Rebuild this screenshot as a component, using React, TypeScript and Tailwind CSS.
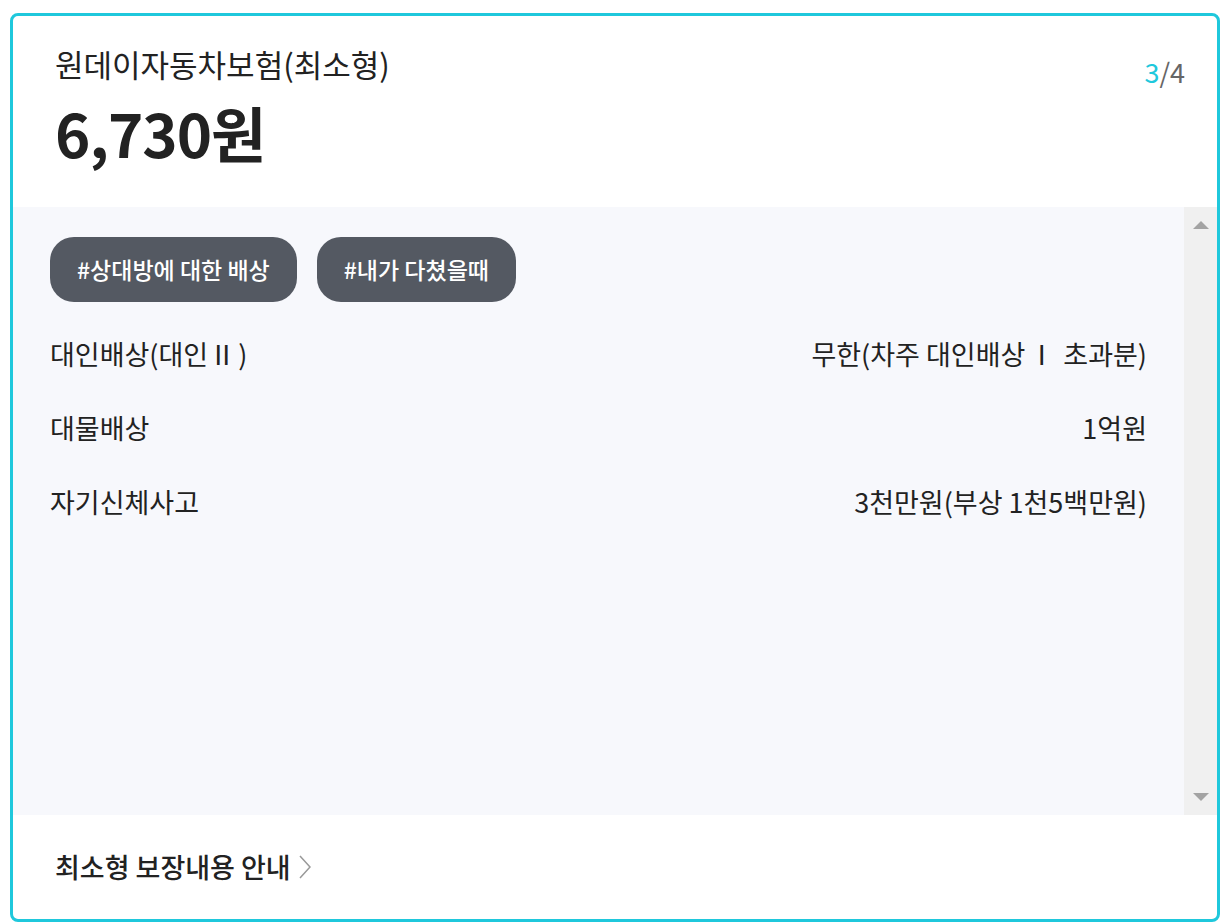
import React from "react";

const font = { fontFamily: '"Noto Sans CJK KR", "Noto Sans", sans-serif' };

function Row({ label, value }: { label: React.ReactNode; value: React.ReactNode }) {
  return (
    <div className="flex h-[74px] items-center justify-between text-[27px] text-[#222]">
      <span className="whitespace-pre">{label}</span>
      <span className="whitespace-pre">{value}</span>
    </div>
  );
}

export default function App() {
  return (
    <div className="w-[1230px] h-[922px] bg-white pt-[13px] pl-[10px]" style={font}>
      <div className="w-[1210px] h-[909px] border-[3px] border-[#1fc8dc] rounded-[8px] flex flex-col overflow-hidden bg-white">
        <div className="h-[191px] flex justify-between pl-[42px] pr-[32px] pt-[28px]">
          <div>
            <div className="text-[31px] leading-[40px] text-[#222]">원데이자동차보험(최소형)</div>
            <div className="mt-[10px] text-[60px] leading-[76px] font-bold text-[#222] tracking-[-1px]">6,730원</div>
          </div>
          <div className="text-[27px] leading-[40px] text-[#666] pt-[8px]">
            <span className="text-[#1fc8dc]">3</span>/4
          </div>
        </div>
        <div className="flex-1 flex bg-[#f7f8fc]">
          <div className="flex-1 pl-[37px] pr-[37px] pt-[30px]">
            <div className="flex gap-[20px]">
              <div className="h-[65px] px-[27px] flex items-center rounded-[24px] bg-[#545962] text-white text-[23px] font-medium">#상대방에 대한 배상</div>
              <div className="h-[65px] px-[27px] flex items-center rounded-[24px] bg-[#545962] text-white text-[23px] font-medium">#내가 다쳤을때</div>
            </div>
            <div className="mt-[15px]">
              <Row
                label={
                  <>
                    대인배상(대인
                    <span className="inline-block w-[14px] ml-[7px] mr-[9px] text-center overflow-visible whitespace-nowrap">
                      <span className="inline-block -mx-[20px]">Ⅱ</span>
                    </span>
                    )
                  </>
                }
                value={
                  <>
                    무한(차주 대인배상
                    <span className="inline-block w-[5px] ml-[14px] mr-[19px] text-center overflow-visible whitespace-nowrap">
                      <span className="inline-block -mx-[20px]">Ⅰ</span>
                    </span>
                    초과분)
                  </>
                }
              />
              <Row label="대물배상" value="1억원" />
              <Row label="자기신체사고" value="3천만원(부상 1천5백만원)" />
            </div>
          </div>
          <div className="w-[33px] bg-[#f0f0f0] flex flex-col items-center justify-between py-[14px]">
            <svg width="16" height="8" viewBox="0 0 16 8"><polygon points="8,0 16,8 0,8" fill="#a3a3a3" /></svg>
            <svg width="16" height="8" viewBox="0 0 16 8"><polygon points="0,0 16,0 8,8" fill="#a3a3a3" /></svg>
          </div>
        </div>
        <div className="h-[104px] flex items-center pl-[42px]">
          <span className="text-[27px] font-medium text-[#222]">최소형 보장내용 안내</span>
          <svg className="ml-[8px]" width="12" height="24" viewBox="0 0 12 24">
            <polyline points="1,1 11,12 1,23" fill="none" stroke="#999" strokeWidth="1.5" />
          </svg>
        </div>
      </div>
    </div>
  );
}
